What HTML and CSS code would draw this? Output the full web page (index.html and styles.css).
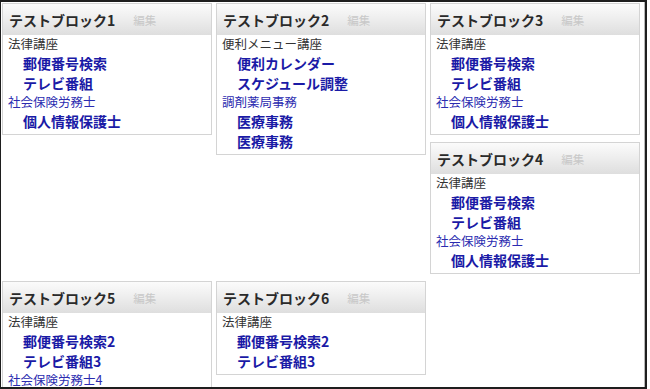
FILE: index.html
```html
<!DOCTYPE html>
<html lang="ja">
<head>
    <meta charset="UTF-8">
    <meta name="viewport" content="width=device-width, initial-scale=1.0">
    <title>テストブロック</title>
    <link rel="stylesheet" href="styles.css">
</head>
<body>
    <div class="frame">
        <div class="board">
            <div class="block">
                <div class="block-head">
                    <h2 class="block-title">テストブロック1</h2>
                    <a class="edit" href="#">編集</a>
                </div>
                <div class="block-body">
                    <div class="cat">法律講座</div>
                    <a class="item" href="#">郵便番号検索</a>
                    <a class="item" href="#">テレビ番組</a>
                    <a class="cat cat-link" href="#">社会保険労務士</a>
                    <a class="item" href="#">個人情報保護士</a>
                </div>
            </div>

            <div class="block">
                <div class="block-head">
                    <h2 class="block-title">テストブロック2</h2>
                    <a class="edit" href="#">編集</a>
                </div>
                <div class="block-body">
                    <div class="cat">便利メニュー講座</div>
                    <a class="item" href="#">便利カレンダー</a>
                    <a class="item" href="#">スケジュール調整</a>
                    <a class="cat cat-link" href="#">調剤薬局事務</a>
                    <a class="item" href="#">医療事務</a>
                    <a class="item" href="#">医療事務</a>
                </div>
            </div>

            <div class="block">
                <div class="block-head">
                    <h2 class="block-title">テストブロック3</h2>
                    <a class="edit" href="#">編集</a>
                </div>
                <div class="block-body">
                    <div class="cat">法律講座</div>
                    <a class="item" href="#">郵便番号検索</a>
                    <a class="item" href="#">テレビ番組</a>
                    <a class="cat cat-link" href="#">社会保険労務士</a>
                    <a class="item" href="#">個人情報保護士</a>
                </div>
            </div>

            <div class="block">
                <div class="block-head">
                    <h2 class="block-title">テストブロック4</h2>
                    <a class="edit" href="#">編集</a>
                </div>
                <div class="block-body">
                    <div class="cat">法律講座</div>
                    <a class="item" href="#">郵便番号検索</a>
                    <a class="item" href="#">テレビ番組</a>
                    <a class="cat cat-link" href="#">社会保険労務士</a>
                    <a class="item" href="#">個人情報保護士</a>
                </div>
            </div>

            <div class="block">
                <div class="block-head">
                    <h2 class="block-title">テストブロック5</h2>
                    <a class="edit" href="#">編集</a>
                </div>
                <div class="block-body">
                    <div class="cat">法律講座</div>
                    <a class="item" href="#">郵便番号検索2</a>
                    <a class="item" href="#">テレビ番組3</a>
                    <a class="cat cat-link" href="#">社会保険労務士4</a>
                    <a class="item" href="#">個人情報保護士5</a>
                </div>
            </div>

            <div class="block">
                <div class="block-head">
                    <h2 class="block-title">テストブロック6</h2>
                    <a class="edit" href="#">編集</a>
                </div>
                <div class="block-body">
                    <div class="cat">法律講座</div>
                    <a class="item" href="#">郵便番号検索2</a>
                    <a class="item" href="#">テレビ番組3</a>
                </div>
            </div>
        </div>
    </div>
</body>
</html>
```

FILE: styles.css
```css
body {
    margin: 0;
    padding: 0;
    background-color: #fff;
    font-family: "Noto Sans CJK JP", "Noto Sans", sans-serif;
    overflow: hidden;
}
.frame {
    width: 647px;
    height: 389px;
    box-sizing: border-box;
    border-top: 2px solid #1e1e1e;
    border-left: 1px solid #1e1e1e;
    border-right: 2px solid #1e1e1e;
    border-bottom: 2px solid #1e1e1e;
    overflow: hidden;
}
.board {
    height: 100%;
    box-sizing: border-box;
    padding: 1px 0 0 1px;
    border-right: 1px solid #b8b8b8;
    overflow: hidden;
}
.block {
    float: left;
    width: 210px;
    box-sizing: border-box;
    margin: 0 4px 7px 0;
    border: 1px solid #d4d4d4;
    background-color: #fff;
}
.block-head {
    display: flex;
    align-items: center;
    height: 31px;
    padding-left: 6px;
    background: linear-gradient(#fbfbfb, #f0f0f0 40%, #dedede);
}
.block-title {
    margin: 0;
    font-size: 14px;
    font-weight: bold;
    color: #2a2a2a;
}
.edit {
    margin-left: 18px;
    font-size: 11.5px;
    color: #c8c8c8;
    text-decoration: none;
}
.block-body {
    padding: 0 5px 3px 5px;
}
.cat {
    display: block;
    height: 18px;
    line-height: 18px;
    font-size: 12.5px;
    color: #333;
    text-decoration: none;
}
.cat-link {
    color: #2b2bb0;
}
.item {
    display: block;
    height: 20px;
    line-height: 20px;
    padding-left: 15px;
    font-size: 14px;
    font-weight: bold;
    color: #1a1aa6;
    text-decoration: none;
}
```
